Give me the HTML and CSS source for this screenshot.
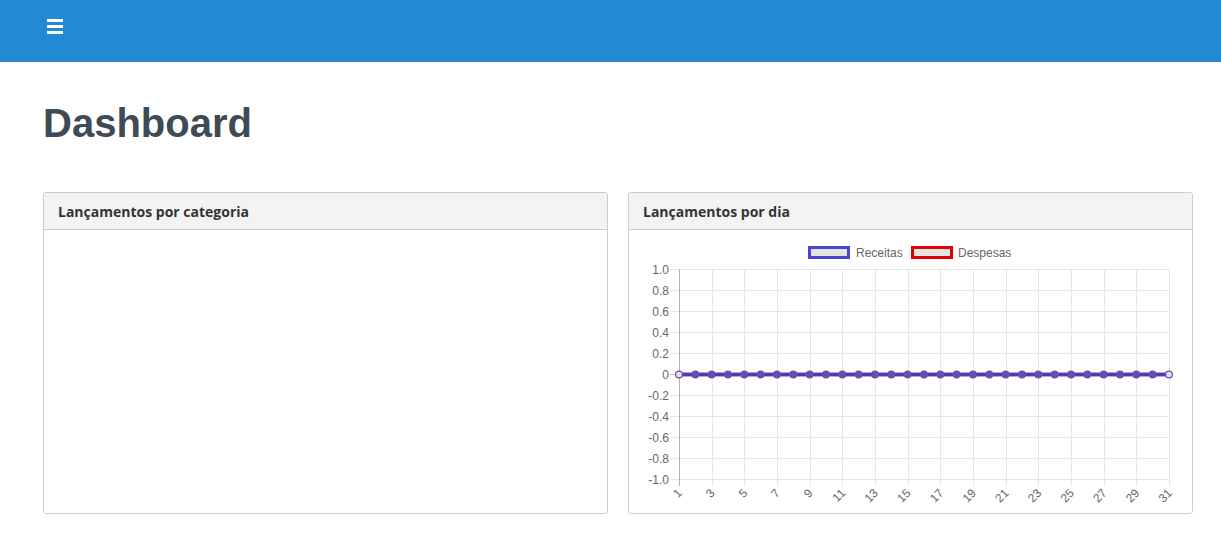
FILE: index.html
```html
<!DOCTYPE html>
<html lang="pt-BR">
<head>
<meta charset="utf-8">
<title>Dashboard</title>
<link rel="stylesheet" href="styles.css">
</head>
<body>
<header class="topbar">
  <button class="menu-btn" aria-label="Menu">
    <svg width="16" height="15" viewBox="0 0 16 15"><rect x="0" y="0" width="16" height="3" fill="#fff"/><rect x="0" y="6" width="16" height="3" fill="#fff"/><rect x="0" y="12" width="16" height="3" fill="#fff"/></svg>
  </button>
</header>
<main class="content">
  <h1 class="page-title">Dashboard</h1>
  <div class="panels">
    <section class="panel">
      <div class="panel-heading"><h3 class="panel-title">Lançamentos por categoria</h3></div>
      <div class="panel-body"></div>
    </section>
    <section class="panel">
      <div class="panel-heading"><h3 class="panel-title">Lançamentos por dia</h3></div>
      <div class="panel-body">
        <svg id="chart" class="chart" width="563" height="283" viewBox="0 0 563 283"></svg>
      </div>
    </section>
  </div>
</main>
<script src="chart.js"></script>
</body>
</html>
```

FILE: chart.js
```js
(function () {
  var svg = document.getElementById('chart');
  var NS = 'http://www.w3.org/2000/svg';
  function el(name, attrs, text) {
    var e = document.createElementNS(NS, name);
    for (var k in attrs) e.setAttribute(k, attrs[k]);
    if (text !== undefined) e.textContent = text;
    svg.appendChild(e);
    return e;
  }
  var x0 = 50, x1 = 540, yTop = 39, step = 21;
  var dx = (x1 - x0) / 30;
  // horizontal grid
  var labels = ['1.0','0.8','0.6','0.4','0.2','0','-0.2','-0.4','-0.6','-0.8','-1.0'];
  for (var k = 0; k <= 10; k++) {
    var y = yTop + k * step;
    el('line', {x1: 41, x2: x1, y1: y + 0.5, y2: y + 0.5, stroke: k === 5 ? '#bfbfbf' : '#e6e6e6', 'stroke-width': 1});
    el('text', {x: 40, y: y + 4.5, 'text-anchor': 'end', 'class': 'tick'}, labels[k]);
  }
  // vertical grid + x labels
  for (var d = 1; d <= 31; d += 2) {
    var x = x0 + (d - 1) * dx;
    var xr = Math.round(x) + 0.5;
    el('line', {x1: xr, x2: xr, y1: yTop, y2: 256, stroke: d === 1 ? '#b3b3b3' : '#e6e6e6', 'stroke-width': 1});
    el('text', {x: x + 1, y: 261, 'text-anchor': 'end', 'dominant-baseline': 'central', 'class': 'tick', transform: 'rotate(-45 ' + (x + 1) + ' 261)'}, String(d));
  }
  // data lines
  var y0 = yTop + 5 * step + 0.5;
  el('line', {x1: x0, x2: x1, y1: y0, y2: y0, stroke: '#dd1111', 'stroke-width': 3.5});
  el('line', {x1: x0, x2: x1, y1: y0, y2: y0, stroke: '#4638d0', 'stroke-width': 3.5});
  for (var i = 0; i <= 30; i++) {
    var px = x0 + i * dx;
    if (i === 0 || i === 30) {
      el('circle', {cx: px, cy: y0, r: 3.4, fill: '#e6e0f2', stroke: '#6a4cae', 'stroke-width': 1.2});
    } else {
      el('circle', {cx: px, cy: y0, r: 3.9, fill: '#6a4cae'});
    }
  }
  // legend
  el('rect', {x: 180.5, y: 17.5, width: 39, height: 10, fill: '#e4e4e4', stroke: '#4a43d6', 'stroke-width': 3});
  el('text', {x: 227, y: 26.5, 'class': 'legend'}, 'Receitas');
  el('rect', {x: 283.5, y: 17.5, width: 39, height: 10, fill: '#e4e4e4', stroke: '#e00000', 'stroke-width': 3});
  el('text', {x: 329, y: 26.5, 'class': 'legend'}, 'Despesas');
})();
```

FILE: styles.css
```css
html, body {
  margin: 0;
  padding: 0;
  background: #fff;
}
body {
  font-family: "Liberation Sans", Arial, sans-serif;
  color: #333;
}
.topbar {
  height: 62px;
  box-sizing: border-box;
  background: #2289d5;
  padding: 19px 0 0 47px;
  display: flex;
  align-items: flex-start;
}
.menu-btn {
  background: none;
  border: 0;
  padding: 0;
  margin: 0;
  display: block;
  line-height: 0;
  cursor: pointer;
}
.content {
  padding: 39px 28px 20px 43px;
}
.page-title {
  margin: 0;
  font-family: "Liberation Sans", Arial, sans-serif;
  font-weight: bold;
  font-size: 40px;
  line-height: 44px;
  color: #3e4a55;
}
.panels {
  margin-top: 47px;
  display: grid;
  grid-template-columns: 1fr 1fr;
  gap: 20px;
}
.panel {
  border: 1px solid #cccccc;
  border-radius: 3px;
  background: #fff;
  overflow: hidden;
}
.panel-heading {
  background: #f3f3f3;
  border-bottom: 1px solid #cccccc;
  padding: 11px 14px 9px 14px;
}
.panel-title {
  margin: 0;
  font-family: "Open Sans", "Noto Sans", sans-serif;
  font-weight: bold;
  font-size: 14px;
  line-height: 16px;
  color: #333;
}
.panel-body {
  height: 283px;
}
.chart {
  display: block;
}
.tick, .legend {
  font-family: "Liberation Sans", Arial, sans-serif;
  font-size: 12px;
  fill: #666;
}
```
